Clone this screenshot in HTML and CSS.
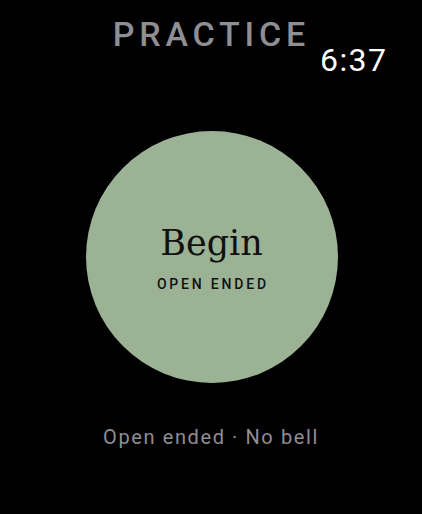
FILE: index.html
```html
<!DOCTYPE html>
<html>
<head>
<meta charset="utf-8">
<link rel="stylesheet" href="styles.css">
</head>
<body>
<div class="screen">
  <header class="top">
    <div class="title">PRACTICE</div>
    <div class="time">6:37</div>
  </header>
  <main class="center">
    <button class="begin">
      <span class="begin-label">Begin</span>
      <span class="begin-sub">OPEN ENDED</span>
    </button>
  </main>
  <footer class="status">Open ended · No bell</footer>
</div>
</body>
</html>
```

FILE: styles.css
```css
html, body {
  margin: 0;
  padding: 0;
  background: #000;
}
.screen {
  width: 422px;
  height: 514px;
  display: flex;
  flex-direction: column;
  font-family: Roboto, "Noto Sans", sans-serif;
}
.top {
  display: grid;
  grid-template-columns: 1fr auto 1fr;
  align-items: start;
  padding: 14px 36px 0 36px;
  height: 131px;
  box-sizing: border-box;
}
.title {
  grid-column: 2;
  color: #8e8e93;
  font-size: 34px;
  font-weight: 500;
  letter-spacing: 4.8px;
  line-height: 40px;
  margin-right: -4.8px;
  margin-left: -4px;
}
.time {
  grid-column: 3;
  justify-self: end;
  color: #fff;
  font-size: 32px;
  font-weight: 400;
  letter-spacing: 1.4px;
  line-height: 36px;
  margin-top: 28px;
  margin-right: -1.4px;
}
.center {
  display: flex;
  justify-content: center;
}
.begin {
  width: 252px;
  height: 252px;
  border: none;
  border-radius: 50%;
  background: #9cb295;
  display: flex;
  flex-direction: column;
  align-items: center;
  justify-content: center;
  padding: 0;
  margin-left: 1px;
}
.begin-label {
  font-family: "DejaVu Serif", "Liberation Serif", serif;
  font-size: 35px;
  color: #111;
  line-height: 44px;
  margin-top: -2px;
}
.begin-sub {
  font-family: Roboto, sans-serif;
  font-size: 14px;
  font-weight: 500;
  letter-spacing: 2.8px;
  color: #111;
  margin-top: 11px;
  margin-right: -2.8px;
}
.status {
  margin-top: 42px;
  text-align: center;
  color: #8e8e93;
  font-size: 20px;
  letter-spacing: 1.6px;
  line-height: 24px;
}
```
